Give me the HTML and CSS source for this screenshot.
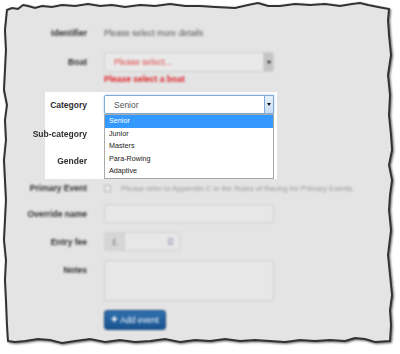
FILE: index.html
```html
<!DOCTYPE html>
<html lang="en">
<head>
  <meta charset="UTF-8" />
  <meta name="viewport" content="width=device-width, initial-scale=1.0" />
  <title>Add event</title>
  <link rel="stylesheet" href="styles.css">
</head>
<body>
  <div class="page">
    <!-- torn paper sheet behind the form -->
    <svg class="paper" width="400" height="354" viewBox="0 0 400 354">
      <path class="paper-edge" d="M7,10 L12,8 L18,9 L23,5 L28,6 L35,8 L42,6 L52,7 L62,5 L75,6 L88,4 L100,6 L112,5 L125,7 L140,5 L155,6 L170,4 L185,6 L200,6 L215,7 L235,8 L248,5 L258,3 L268,6 L280,6 L295,4 L310,5 L325,4 L340,6 L352,4 L360,3 L368,5 L378,7 L389,9
        L388,20 L389,35 L391,55 L388,75 L390,95 L389,115 L391,135 L392,150 L389,165 L392,180 L390,195 L389,210 L391,230 L388,255 L390,275 L392,295 L390,310 L391,325 L390,341
        L375,342 L365,339 L355,338 L345,341 L330,340 L315,341 L300,340 L285,342 L270,341 L255,340 L240,341 L225,339 L210,341 L195,340 L180,342 L165,339 L150,341 L135,342 L120,340 L105,342 L90,339 L75,341 L62,343 L50,340 L38,339 L25,341 L15,342 L8,341
        L7,325 L6,300 L5,280 L6,260 L4,240 L5,220 L6,200 L5,180 L4,160 L6,140 L5,120 L7,105 L4,90 L5,70 L6,50 L5,30 Z" />
    </svg>

    <form class="form">
      <div class="row row-first blur">
        <div class="label">Identifier</div>
        <div class="control static">Please select more details</div>
      </div>

      <div class="row blur">
        <div class="label">Boat</div>
        <div class="control">
          <div class="select select-muted">
            <span class="select-text error-text">Please select...</span>
            <span class="select-btn"><span class="caret"></span></span>
          </div>
        </div>
      </div>

      <div class="row row-error blur">
        <div class="label"></div>
        <div class="control error-msg">Please select a boat</div>
      </div>

      <div class="focus-box">
        <div class="row row-category">
          <div class="label">Category</div>
          <div class="control">
            <div class="select select-focus">
              <span class="select-text">Senior</span>
              <span class="select-btn"><span class="caret"></span></span>
            </div>
            <ul class="options">
              <li class="option active">Senior</li>
              <li class="option">Junior</li>
              <li class="option">Masters</li>
              <li class="option">Para-Rowing</li>
              <li class="option">Adaptive</li>
            </ul>
          </div>
        </div>
        <div class="row row-sub soft">
          <div class="label">Sub-category</div>
        </div>
        <div class="row row-gender soft">
          <div class="label">Gender</div>
        </div>
      </div>

      <div class="row row-primary blur">
        <div class="label">Primary Event</div>
        <div class="control check-line">
          <span class="checkbox"></span>
          <span class="help">Please refer to Appendix C in the Rules of Racing for Primary Events.</span>
        </div>
      </div>

      <div class="row blur">
        <div class="label">Override name</div>
        <div class="control"><div class="input"></div></div>
      </div>

      <div class="row blur">
        <div class="label">Entry fee</div>
        <div class="control">
          <div class="input-group">
            <span class="addon">£</span>
            <span class="fee-input"><span class="spin"></span></span>
          </div>
        </div>
      </div>

      <div class="row row-notes blur">
        <div class="label">Notes</div>
        <div class="control"><div class="input textarea"></div></div>
      </div>

      <div class="row blur">
        <div class="label"></div>
        <div class="control">
          <button type="button" class="btn-primary"><span class="plus">✚</span> Add event</button>
        </div>
      </div>
    </form>
  </div>
</body>
</html>
```

FILE: styles.css
```css
:root {
  --paper: #e4e4e4;
  --label: #2e2e2e;
  --border: #d0d0d0;
  --red: #e0242a;
  --blue: #3399ff;
}

* {
  margin: 0;
  padding: 0;
  box-sizing: border-box;
}

html, body {
  width: 100%;
  height: 100%;
  background: #fff;
  font-family: "Liberation Sans", Arial, sans-serif;
  font-size: 8.5px;
  color: var(--label);
}

.page {
  position: relative;
  width: 400px;
  height: 354px;
  overflow: hidden;
}

.paper {
  position: absolute;
  top: 0;
  left: 0;
}

.paper-edge {
  fill: var(--paper);
  stroke: #333;
  stroke-width: 2;
  filter: drop-shadow(1.5px 1.5px 1px rgba(0, 0, 0, 0.6));
}

.form {
  position: relative;
  padding-top: 24px;
  display: flex;
  flex-direction: column;
}

/* form rows */
.row {
  display: flex;
  align-items: center;
  gap: 17px;
  height: 19px;
  margin-top: 9px;
}

.row-first { margin-top: 0; height: 18px; }
.row-first + .row { margin-top: 10px; height: 20px; }
.row-error { margin-top: 1px; height: 11px; }

.label {
  width: 87px;
  flex: none;
  display: flex;
  justify-content: flex-end;
  white-space: nowrap;
  font-weight: bold;
}

.control {
  width: 170px;
  flex: none;
  position: relative;
}

.blur { filter: blur(0.8px); }
.soft { filter: blur(0.5px); }

.static { color: #555; }

.error-msg {
  color: var(--red);
  font-weight: bold;
}

/* selects */
.select {
  display: flex;
  align-items: center;
  height: 19px;
  border: 1px solid var(--border);
  border-radius: 2px;
  padding-left: 9px;
}

.row-first + .row .select { height: 20px; }

.select-text {
  flex: 1;
  color: #555;
}

.error-text { color: #e04848; }

.select-btn {
  width: 10px;
  height: 100%;
  display: flex;
  align-items: center;
  justify-content: center;
  border-left: 1px solid var(--border);
}

.caret {
  width: 0;
  height: 0;
  border-left: 2.5px solid transparent;
  border-right: 2.5px solid transparent;
  border-top: 3px solid #111;
}

.select-muted { background: #e9e9e9; }
.select-muted .select-btn { background: #c4c4c4; }

.select-focus {
  background: #fff;
  border-color: #7ea9d8;
  box-shadow: 0 0 2px rgba(82, 148, 220, 0.6);
}

.select-focus .select-btn {
  background: linear-gradient(#e6f0fa, #c8ddf2);
  border: 1px solid #7ea9d8;
  margin-right: -1px;
  height: calc(100% + 2px);
}

/* focused category area */
.focus-box {
  margin-top: 8px;
  margin-left: 45px;
  width: 232px;
  height: 87px;
  padding-top: 3px;
  background: #fff;
}

.focus-box .row { margin-top: 0; }
.focus-box .label { width: 42px; }
.focus-box .row-sub { margin-top: 10px; }
.focus-box .row-gender { margin-top: 8px; }

.options {
  position: absolute;
  top: 100%;
  left: 0;
  width: 170px;
  list-style: none;
  background: #fff;
  border: 1px solid #a9a9a9;
  z-index: 2;
}

.option {
  height: 12.6px;
  line-height: 12.6px;
  padding-left: 4px;
  font-size: 7.2px;
  color: #222;
}

.option.active {
  background: var(--blue);
  color: #fff;
}

/* primary event */
.row-primary {
  margin-top: 2px;
  height: 14px;
}

.check-line {
  display: flex;
  align-items: center;
  gap: 10px;
  width: 280px;
  white-space: nowrap;
}

.checkbox {
  width: 7px;
  height: 7px;
  border: 1px solid #b5b5b5;
  background: #ececec;
  flex: none;
}

.help {
  color: #9a9a9a;
  font-size: 7.6px;
}

/* inputs */
.input {
  height: 19px;
  border: 1px solid var(--border);
  border-radius: 2px;
  background: #e7e7e7;
}

.row-notes { height: 41px; align-items: flex-start; }
.row-notes .label { padding-top: 5px; }
.textarea { height: 41px; }

.input-group {
  display: flex;
  width: 76px;
  height: 19px;
  border: 1px solid var(--border);
  border-radius: 2px;
}

.addon {
  width: 20px;
  display: flex;
  align-items: center;
  justify-content: center;
  background: #d6d6d6;
  color: #777;
  border-right: 1px solid var(--border);
}

.fee-input {
  flex: 1;
  display: flex;
  align-items: center;
  justify-content: flex-end;
  padding-right: 6px;
  background: #e7e7e7;
}

.spin {
  width: 5px;
  height: 7px;
  border: 1px solid #a8a8c0;
  background: #d4d4e0;
}

/* button */
.btn-primary {
  height: 20px;
  width: 62px;
  border: 1px solid #174a7c;
  border-radius: 3px;
  background: linear-gradient(#2f6fae, #1a5490);
  color: #fff;
  font-family: "Liberation Sans", Arial, sans-serif;
  font-size: 8.5px;
  display: flex;
  align-items: center;
  justify-content: center;
  gap: 2px;
}

.plus {
  font-size: 8px;
}
```
